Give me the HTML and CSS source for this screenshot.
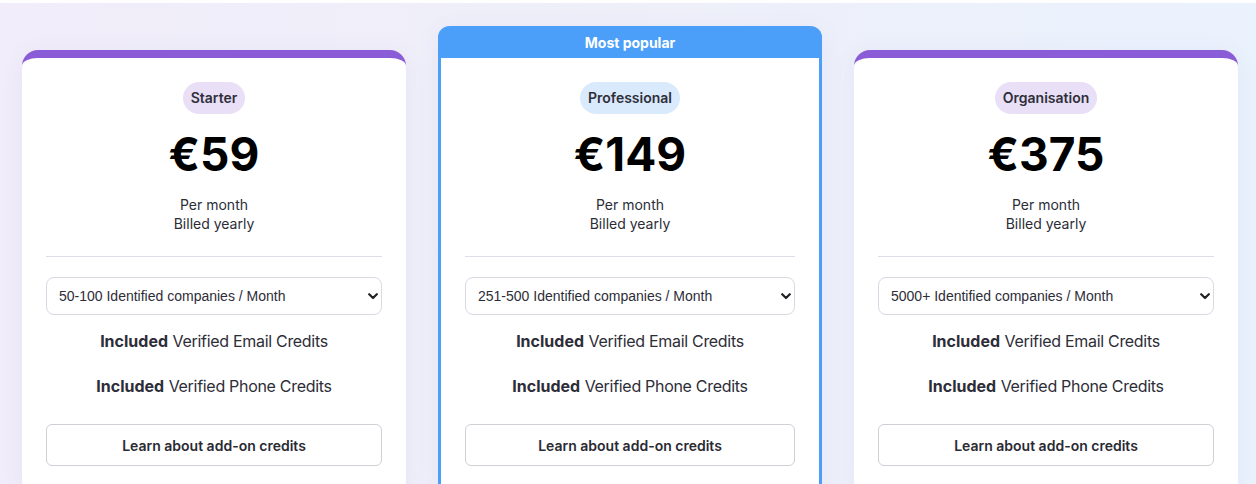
FILE: index.html
```html
<!DOCTYPE html>
<html lang="en">
<head>
<meta charset="utf-8">
<title>Pricing</title>
<link rel="stylesheet" href="styles.css">
</head>
<body>
<main class="page">
  <section class="card card-side">
    <div class="card-body">
      <span class="pill pill-purple">Starter</span>
      <div class="price">€59</div>
      <p class="billing">Per month<br>Billed yearly</p>
      <hr class="divider">
      <div class="select-wrap">
        <select class="plan-select"><option>50-100 Identified companies / Month</option></select>
        <svg class="chev" width="10" height="7" viewBox="0 0 10 7"><path d="M1.2 1.2 L5 5 L8.8 1.2" fill="none" stroke="#222" stroke-width="2.2" stroke-linecap="round" stroke-linejoin="round"/></svg>
      </div>
      <p class="feature"><strong>Included</strong> <span class="feat-text">Verified Email Credits</span></p>
      <p class="feature feature-2"><strong>Included</strong> <span class="feat-text">Verified Phone Credits</span></p>
      <button class="btn">Learn about add-on credits</button>
    </div>
  </section>

  <section class="card card-popular">
    <div class="popular-head">Most popular</div>
    <div class="card-body">
      <span class="pill pill-blue">Professional</span>
      <div class="price">€149</div>
      <p class="billing">Per month<br>Billed yearly</p>
      <hr class="divider">
      <div class="select-wrap">
        <select class="plan-select"><option>251-500 Identified companies / Month</option></select>
        <svg class="chev" width="10" height="7" viewBox="0 0 10 7"><path d="M1.2 1.2 L5 5 L8.8 1.2" fill="none" stroke="#222" stroke-width="2.2" stroke-linecap="round" stroke-linejoin="round"/></svg>
      </div>
      <p class="feature"><strong>Included</strong> <span class="feat-text">Verified Email Credits</span></p>
      <p class="feature feature-2"><strong>Included</strong> <span class="feat-text">Verified Phone Credits</span></p>
      <button class="btn">Learn about add-on credits</button>
    </div>
  </section>

  <section class="card card-side">
    <div class="card-body">
      <span class="pill pill-purple">Organisation</span>
      <div class="price">€375</div>
      <p class="billing">Per month<br>Billed yearly</p>
      <hr class="divider">
      <div class="select-wrap">
        <select class="plan-select"><option>5000+ Identified companies / Month</option></select>
        <svg class="chev" width="10" height="7" viewBox="0 0 10 7"><path d="M1.2 1.2 L5 5 L8.8 1.2" fill="none" stroke="#222" stroke-width="2.2" stroke-linecap="round" stroke-linejoin="round"/></svg>
      </div>
      <p class="feature"><strong>Included</strong> <span class="feat-text">Verified Email Credits</span></p>
      <p class="feature feature-2"><strong>Included</strong> <span class="feat-text">Verified Phone Credits</span></p>
      <button class="btn">Learn about add-on credits</button>
    </div>
  </section>
</main>
</body>
</html>
```

FILE: styles.css
```css
* { box-sizing: border-box; }

html, body {
  margin: 0;
  padding: 0;
  background: #ffffff;
  height: 484px;
  overflow: hidden;
}

body {
  font-family: Inter, "Noto Sans", sans-serif;
  color: #2d2d38;
  padding-top: 3px;
}

.page {
  display: flex;
  align-items: flex-start;
  gap: 32px;
  padding: 23px 18px 0 22px;
  height: 481px;
  overflow: hidden;
  background: linear-gradient(90deg, #f1edfa 0%, #eeeff9 50%, #eaf2fd 100%);
}

.card {
  width: 384px;
  flex: 0 0 384px;
  background: #ffffff;
  border-radius: 16px;
  box-shadow: 0 4px 24px rgba(110, 100, 190, 0.07);
}

.card-side {
  margin-top: 24px;
  border-top: 8px solid #8b5cd7;
}

.card-popular {
  border: 3px solid #4b9ff8;
  border-top: 0;
  border-radius: 12px;
}

.popular-head {
  height: 32px;
  margin: 0 -3px;
  background: #4b9ff8;
  border-radius: 12px 12px 0 0;
  color: #ffffff;
  font-size: 14px;
  font-weight: 700;
  line-height: 34px;
  text-align: center;
}

.card-body {
  display: flex;
  flex-direction: column;
  align-items: center;
  padding: 24px 24px 30px;
}

.pill {
  display: inline-block;
  height: 32px;
  padding: 6px 8px;
  border-radius: 16px;
  font-size: 14px;
  line-height: 20px;
  font-weight: 600;
  color: #2f2f3a;
}

.pill-purple { background: #e9dff7; }
.pill-blue { background: #d9eafc; }

.price {
  margin-top: 11px;
  font-size: 46px;
  line-height: 58px;
  font-weight: 700;
  color: #000000;
}

.billing {
  margin: 12px 0 0;
  font-size: 14px;
  line-height: 19px;
  text-align: center;
  color: #2d2d38;
}

.divider {
  align-self: stretch;
  margin: 23px 0 0;
  border: 0;
  border-top: 1px solid #dcdeec;
  height: 0;
}

.select-wrap {
  position: relative;
  align-self: stretch;
  margin-top: 20px;
}

.plan-select {
  display: block;
  width: 100%;
  height: 38px;
  padding: 0 28px 0 12px;
  -webkit-appearance: none;
  appearance: none;
  background: #ffffff;
  border: 1px solid #d9d9e4;
  border-radius: 8px;
  font-family: "Liberation Sans", Arial, sans-serif;
  font-size: 14px;
  color: #2d2d38;
}

.chev {
  position: absolute;
  right: 4px;
  top: 16px;
  pointer-events: none;
}

.feature {
  margin: 14px 0 0;
  font-size: 16px;
  line-height: 24px;
  text-align: center;
  color: #2d2d38;
}

.feature strong { font-weight: 700; }

.feat-text { letter-spacing: -0.3px; }

.feature-2 { margin-top: 21px; }

.btn {
  align-self: stretch;
  margin-top: 26px;
  height: 42px;
  background: #ffffff;
  border: 1px solid #cfcfd6;
  border-radius: 6px;
  font-family: Inter, "Noto Sans", sans-serif;
  font-size: 14px;
  font-weight: 600;
  color: #2a2a33;
  cursor: pointer;
}
```
